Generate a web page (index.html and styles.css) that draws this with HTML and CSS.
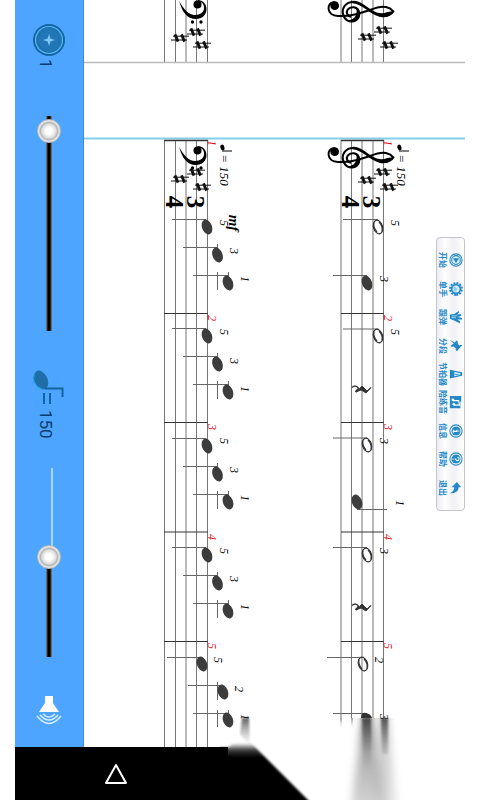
FILE: index.html
```html
<!DOCTYPE html>
<html lang="zh-CN">

<head>
    <meta charset="UTF-8">
    <meta name="viewport" content="width=device-width, initial-scale=1.0">
    <title>Piano practice</title>
    <link rel="stylesheet" href="styles.css">
</head>

<body>
    <div class="app">
        <aside class="sidebar">
            <button class="track" aria-label="Track 1">
                <svg width="34" height="34" viewBox="0 0 34 34">
                    <circle cx="17" cy="17" r="16" fill="#1565a0" />
                    <circle cx="17" cy="17" r="13.5" fill="#1d74b0" stroke="#55b6f2" stroke-width="1.2" />
                    <circle cx="17" cy="17" r="10.5" fill="#2277b4" />
                    <path d="M17 11l1.4 4.6L23 17l-4.6 1.4L17 23l-1.4-4.6L11 17l4.6-1.4z" fill="#7cc8fa" />
                </svg>
                <span class="value">1</span>
            </button>
            <input class="slider slider-position" type="range" min="0" max="1000" value="16" aria-label="Position">
            <div class="tempo">
                <svg width="34" height="36" viewBox="0 0 34 36">
                    <ellipse cx="9" cy="10" rx="6.5" ry="10" transform="rotate(-25 9 10)" fill="#1f6ea8" />
                    <path d="M3 3Q-2 14 10 19" fill="none" stroke="#12a0dd" />
                    <path d="M13 18.500H30.500V27" fill="none" stroke="#12649c" stroke-width="2" />
                    <path d="M12 23v11M18 23v11" stroke="#12649c" stroke-width="2" />
                </svg>
                <span class="value">150</span>
            </div>
            <input class="slider slider-volume" type="range" min="0" max="1000" value="467" aria-label="Volume">
            <svg class="speaker" width="28" height="34" viewBox="0 0 28 34">
                <path d="M10 1h8v7l6 9H4l6-9z" fill="#fff" />
                <path d="M8 19q6 6 12 0M5 20q9 10 18 0M2 21q12 15 24 0" fill="none" stroke="#d9edff" stroke-width="1.500" />
            </svg>
        </aside>

        <main class="sheet">
            <svg class="score" viewBox="84 0 381 800">
                <defs>
                    <ellipse id="head" rx="5" ry="7.700" transform="rotate(-20)" fill="#3c3c3c" />
                    <g id="half">
                        <ellipse rx="4.500" ry="7" transform="rotate(-17)" fill="none" stroke="#333" stroke-width="1.200" />
                        <path d="M-4-4.500Q-5 1-1 5M4 4.500Q5-1 1-5" fill="none" stroke="#333" stroke-width="1.200" />
                    </g>
                    <g id="sharp" stroke="#111" fill="none">
                        <path d="M-9 2H7M-7-1.800H9" />
                        <path d="M-5-3.600l3 7.200M1.500-3.600l3 7.200" stroke-width="2.800" />
                    </g>
                    <g id="rest">
                        <path d="M-10-1.500Q-6-5-3 0" fill="none" stroke="#333" stroke-width="1.500" />
                        <path d="M-3.500 0L-6.500 3" stroke="#333" stroke-width="2" />
                        <path d="M-5 2.500L0-3L5 2L9-1.500L4 4L1 2L-1 1z" fill="#333" stroke="#333" />
                    </g>
                    <g id="bass">
                        <path d="M179 0.500C183 9 189 15 195 15C200.500 15 204 12 204 8C204 4 202 1.500 198 1.500L197.500 0C203 0 206.500 4 206.500 9C206.500 15 202 19 196 19C187 19 182 12 179 0.500z" />
                        <circle cx="197.500" cy="4.500" r="4" />
                        <circle cx="192.500" cy="22" r="1.700" />
                        <circle cx="201" cy="22" r="1.700" />
                    </g>
                    <g id="treble" transform="translate(310 0) scale(.3333)">
                        <circle cx="74" cy="17" r="13" />
                        <path d="M74 7C48 5 48 48 84 48C120 50 150 40 180 30C200 22 215 18 228 21C240 24 246 29 250 34C244 43 236 48 222 47" fill="none" stroke="#000" stroke-width="6" />
                        <path d="M128 2C152 1 165 18 184 29C203 41 217 42 232 36L253 33C240 51 225 55 208 50C176 42 160 13 128 10z" />
                        <path d="M130 6C106 6 95 25 99 42C103 60 118 67 131 64C148 59 151 43 145 31C139 20 122 18 113 29C107 38 112 48 123 50" fill="none" stroke="#000" stroke-width="6" />
                        <path d="M113 61Q128 71 141 61Q153 50 149 32Q146 23 138 21Q144 44 131 55Q124 61 113 61z" />
                    </g>
                    <g id="tempo-note">
                        <ellipse cx="2" cy="-2" rx="2" ry="3" transform="rotate(-15)" />
                        <path d="M1 1H11" stroke="#000" />
                    </g>
                    <g id="left-stems" class="line">
                        <path d="M172 219.500H206M183 247.500H217M193 275.500H228" />
                        <path d="M217.500 244v18M217.500 272v18M228.500 272v18" />
                    </g>
                    <g id="left-notes">
                        <use href="#left-stems" />
                        <use href="#head" x="207" y="227" />
                        <use href="#head" x="217.500" y="255" />
                        <use href="#head" x="228" y="283" />
                    </g>
                    <linearGradient id="fade" x2="0" y2="1">
                        <stop offset="0" stop-color="#333" stop-opacity=".8" />
                        <stop offset=".4" stop-color="#888" stop-opacity=".7" />
                        <stop offset="1" stop-color="#bbb" stop-opacity=".7" />
                    </linearGradient>
                    <linearGradient id="fade-out" x2="0" y2="1">
                        <stop offset="0" stop-color="#333" stop-opacity=".8" />
                        <stop offset="1" stop-color="#aaa" stop-opacity="0" />
                    </linearGradient>
                    <linearGradient id="corner" gradientUnits="userSpaceOnUse" x1="0" y1="743" x2="0" y2="757">
                        <stop offset="0" stop-color="#000" stop-opacity="0" />
                        <stop offset=".5" stop-color="#000" stop-opacity=".75" />
                        <stop offset="1" stop-color="#000" />
                    </linearGradient>
                    <filter id="soft"><feGaussianBlur stdDeviation="1" /></filter>
                    <filter id="softer" x="-1" y="0" width="3" height="1.2"><feGaussianBlur stdDeviation="4 0" /></filter>
                </defs>

                <!-- end of the previous line -->
                <path class="staff" d="M164.500 0V62M175.500 0V62M186 0V62M196.500 0V62M207.500 0V62M341 0V62M351.500 0V62M362 0V62M373 0V62M383.500 0V62" />
                <use href="#bass" />
                <use href="#sharp" x="180" y="38" />
                <use href="#sharp" x="196" y="32" />
                <use href="#sharp" x="202" y="45" />
                <use href="#treble" />
                <use href="#sharp" x="367" y="37" />
                <use href="#sharp" x="383" y="30" />
                <use href="#sharp" x="389" y="45" />
                <path d="M84 62.500H465" stroke="#bbb" stroke-width="1.500" />
                <path d="M84 138.500H465" stroke="#84d0ea" stroke-width="2" />

                <!-- staves and bar lines -->
                <path class="staff" d="M164.500 140V747M175.500 140V747M186 140V747M196.500 140V747M207.500 140V747M341 140V718M351.500 140V718M362 140V718M373 140V718M383.500 140V718" />
                <path d="M164 140.500H208M341 140.500H384" stroke="#333" stroke-width="1.500" />
                <path class="bar" d="M164 313.500H208M164 422.500H208M164 532H208M164 641.500H208M341 313.500H384M341 422.500H384M341 532H384M341 641.500H384" />

                <!-- left hand -->
                <use href="#bass" y="146" />
                <use href="#sharp" x="180" y="179" />
                <use href="#sharp" x="196" y="172" />
                <use href="#sharp" x="202" y="187" />
                <use href="#tempo-note" x="221" y="150" />
                <use href="#left-notes" />
                <use href="#left-notes" y="109" />
                <use href="#left-notes" y="219" />
                <use href="#left-notes" y="328" />
                <path class="line" d="M167 657.500H201M188 685.500H222M193 713.500H228M217.500 682v18M217.500 710v17M228.500 710v8" />
                <use href="#head" x="202" y="664" />
                <use href="#head" x="223" y="692" />
                <use href="#head" x="228" y="720" />

                <!-- right hand -->
                <use href="#treble" y="146" />
                <use href="#sharp" x="367" y="180" />
                <use href="#sharp" x="383" y="172" />
                <use href="#sharp" x="389" y="187" />
                <use href="#tempo-note" x="398" y="150" />
                <path class="line" d="M343 219.500H378M333 275.500H367M343 329H378M333 438H367M357 509.500H387M333 547.500H367M327 657.500H362M333 713.500H367" />
                <use href="#half" x="378" y="227" />
                <use href="#head" x="367" y="283" />
                <use href="#half" x="378" y="336" />
                <use href="#rest" x="362" y="389" />
                <use href="#half" x="367" y="445" />
                <use href="#head" x="357" y="502" />
                <use href="#half" x="367" y="555" />
                <use href="#rest" x="362" y="607" />
                <use href="#half" x="363" y="664" />
                <path d="M361 718Q361 712 366 713Q371 714 372 718z" fill="#333" />

                <!-- time signature -->
                <g class="time">
                    <text transform="translate(187 202) rotate(90)">3</text>
                    <text transform="translate(166 202) rotate(90)">4</text>
                    <text transform="translate(363 202) rotate(90)">3</text>
                    <text transform="translate(342 202) rotate(90)">4</text>
                </g>
                <g class="mark">
                    <text transform="translate(220 170) rotate(90)">= 150</text>
                    <text transform="translate(397 170) rotate(90)">= 150</text>
                </g>
                <text class="dynamic" transform="translate(229 223) rotate(90)">mf</text>

                <g class="bar-number">
                    <text transform="translate(208 143) rotate(90)">1</text>
                    <text transform="translate(208 318) rotate(90)">2</text>
                    <text transform="translate(208 427) rotate(90)">3</text>
                    <text transform="translate(208 537) rotate(90)">4</text>
                    <text transform="translate(208 646) rotate(90)">5</text>
                    <text transform="translate(384 143) rotate(90)">1</text>
                    <text transform="translate(384 318) rotate(90)">2</text>
                    <text transform="translate(384 427) rotate(90)">3</text>
                    <text transform="translate(384 537) rotate(90)">4</text>
                    <text transform="translate(384 646) rotate(90)">5</text>
                </g>

                <!-- fingering -->
                <g class="finger">
                    <text transform="translate(220 223) rotate(90)">5</text>
                    <text transform="translate(230 251) rotate(90)">3</text>
                    <text transform="translate(241 279) rotate(90)">1</text>
                    <text transform="translate(220 332) rotate(90)">5</text>
                    <text transform="translate(230 361) rotate(90)">3</text>
                    <text transform="translate(241 389) rotate(90)">1</text>
                    <text transform="translate(220 441) rotate(90)">5</text>
                    <text transform="translate(230 470) rotate(90)">3</text>
                    <text transform="translate(241 498) rotate(90)">1</text>
                    <text transform="translate(220 551) rotate(90)">5</text>
                    <text transform="translate(230 579) rotate(90)">3</text>
                    <text transform="translate(241 607) rotate(90)">1</text>
                    <text transform="translate(214 660) rotate(90)">5</text>
                    <text transform="translate(235 689) rotate(90)">2</text>
                    <text transform="translate(241 717) rotate(90)">1</text>
                    <text transform="translate(391 223) rotate(90)">5</text>
                    <text transform="translate(380 279) rotate(90)">3</text>
                    <text transform="translate(391 332) rotate(90)">5</text>
                    <text transform="translate(380 441) rotate(90)">3</text>
                    <text transform="translate(396 503) rotate(90)">1</text>
                    <text transform="translate(380 551) rotate(90)">3</text>
                    <text transform="translate(375 660) rotate(90)">2</text>
                    <text transform="translate(380 717) rotate(90)">3</text>
                </g>

                <!-- page curl shadow -->
                <rect x="325" y="719" width="75" height="10" fill="#fff" />
                <path d="M363 718H371L386 800H352z" fill="url(#fade)" filter="url(#softer)" />
                <path d="M381 718H387L396 800H374z" fill="url(#fade)" opacity=".6" filter="url(#softer)" />
                <path d="M362 718h9v56h-8zM381 718h7v36h-6z" fill="url(#fade-out)" filter="url(#soft)" />
                <path d="M340 718h2v10h-2zM351 718h2v10h-2z" fill="url(#fade-out)" opacity=".6" />
                <path d="M231 729L236 722L262 746H231z" fill="#fff" filter="url(#soft)" />
                <path d="M242 718H249L250 746L240 734z" fill="url(#fade-out)" filter="url(#soft)" />
                <path d="M220 747H229L234 742H250L310 802V810H220z" fill="url(#corner)" filter="url(#soft)" />
            </svg>

            <div class="toolbar">
                <button><span>开始</span>
                    <svg viewBox="0 0 16 16"><circle cx="8" cy="8" r="7" fill="#fff" stroke="#2488c8" stroke-width="1.200" /><circle cx="8" cy="8" r="5" fill="#d7efff" stroke="#2488c8" stroke-width="1.200" /><path d="M6 4.500v7L11.500 8z" fill="#2488c8" /></svg>
                </button>
                <button><span>单手</span>
                    <svg viewBox="0 0 16 16"><circle cx="8" cy="8" r="6.800" fill="none" stroke="#2488c8" stroke-width="2.200" stroke-dasharray="2.200 1.360" /><circle cx="8" cy="8" r="5" fill="#e0f3ff" stroke="#2488c8" stroke-width="2" /><path d="M5 9q3-5 6 0v2H5z" fill="#8fcbed" /></svg>
                </button>
                <button><span>跟弹</span>
                    <svg viewBox="0 0 16 16"><path d="M5 15L4.500 10L1 5L3 4.500L5 7L4.500 2L6.500 2L8 6L9 1L11 1.500L10.500 6.500L13 3L15 4L12.500 9L10 15z" fill="#2488c8" /><path d="M6.500 7l.5 6M9 8l-.5 5" stroke="#a9dcfa" /></svg>
                </button>
                <button><span>分段</span>
                    <svg viewBox="0 0 16 16"><path d="M7 1L14 7L12 8.500L11 8L8.500 10.500L9 13L7.500 14L5 10.500L1 15L4 9.500L1.500 7L3 6L5.500 6L7.500 4L6.500 2.500z" fill="#2488c8" /></svg>
                </button>
                <button><span>节拍器</span>
                    <svg viewBox="0 0 16 16"><path d="M6 1h4l3 14H3z" fill="#2488c8" /><path d="M7 3h2l1.500 7h-5z" fill="#d7efff" /><path d="M8 10l1.500-7" stroke="#2488c8" /></svg>
                </button>
                <button><span>陪练音</span>
                    <svg viewBox="0 0 16 16"><path d="M1 2h6l1 1h7v12H1z" fill="#2488c8" /><path d="M6.500 11.500V5l5-1v6.500" fill="none" stroke="#fff" stroke-width="1.300" /><circle cx="5.500" cy="11.500" r="1.500" fill="#fff" /><circle cx="10.500" cy="10.500" r="1.500" fill="#fff" /></svg>
                </button>
                <button><span>信息</span>
                    <svg viewBox="0 0 16 16"><circle cx="8" cy="8" r="7" fill="#fff" stroke="#2488c8" stroke-width="1.200" /><circle cx="8" cy="8" r="5.200" fill="#2488c8" /><path d="M6.500 7H8.500V11M6.500 11H10M8 4v1.600" fill="none" stroke="#fff" stroke-width="1.400" /></svg>
                </button>
                <button><span>帮助</span>
                    <svg viewBox="0 0 16 16"><circle cx="8" cy="8" r="7" fill="#fff" stroke="#2488c8" stroke-width="1.200" /><circle cx="8" cy="8" r="5.200" fill="#2488c8" /><path d="M6 6.500Q6 4.500 8 4.500T10 6.500Q10 7.500 8 8.500V9.500M8 10.500V12" fill="none" stroke="#fff" stroke-width="1.300" /></svg>
                </button>
                <button><span>退出</span>
                    <svg viewBox="0 0 16 16"><path d="M1 7L7 2V5Q14 5 14 15Q11 9.500 7 10V13z" fill="#2488c8" /></svg>
                </button>
            </div>
        </main>

        <nav class="navbar">
            <button class="back" aria-label="Back">
                <svg width="24" height="22" viewBox="0 0 24 22">
                    <path d="M12 2L22 20H2z" fill="none" stroke="#fff" stroke-width="2" stroke-linejoin="round" />
                </svg>
            </button>
        </nav>
    </div>
</body>

</html>
```
FILE: styles.css
```css
body {
    margin: 0;
    background: #fff;
    font-family: Roboto, "Noto Sans CJK SC", sans-serif;
}

button {
    padding: 0;
    border: none;
    background: none;
    font: inherit;
    color: inherit;
}

svg {
    display: block;
}

.app {
    display: grid;
    grid-template-columns: 69px 1fr;
    grid-template-rows: 1fr 53px;
    min-height: 100vh;
    padding: 0 15px;
    box-sizing: border-box;
}

/* left strip with the two sliders */
.sidebar {
    grid-area: 1 / 1;
    display: flex;
    flex-direction: column;
    align-items: center;
    padding-top: 23px;
    box-sizing: border-box;
    background: #4da5ff;
    border-right: 1px solid #3f8bd8;
    color: #0b3c6c;
}

.track,
.tempo {
    display: flex;
    flex-direction: column;
    align-items: center;
}

.value {
    writing-mode: vertical-rl;
    font-size: 17px;
    line-height: 20px;
    margin-right: 6px;
}

.track .value {
    margin-top: 2px;
}

.tempo {
    margin-top: 39px;
}

.tempo .value {
    margin-top: 4px;
}

.slider {
    appearance: none;
    writing-mode: vertical-lr;
    width: 24px;
    margin: 0;
    background: linear-gradient(90deg, #888, #000 35%, #000 65%, #888) center / 6px 100% no-repeat;
}

.slider-position {
    height: 215px;
    margin-top: 47px;
}

.slider-volume {
    height: 189px;
    margin-top: 30px;
    background: linear-gradient(#a8d6ff, #a8d6ff) 14px 0 / 2px 50% no-repeat,
        linear-gradient(90deg, #888, #000 35%, #000 65%, #888) center bottom / 6px 50% no-repeat;
}

.slider::-webkit-slider-thumb {
    appearance: none;
    width: 24px;
    height: 24px;
    border: 1px solid #bbb;
    border-radius: 50%;
    background: radial-gradient(circle, #fff 20%, #ddd 45%, #b4b4b4 56%, #e4e4e4 64%);
}

.speaker {
    margin-top: 38px;
}

/* sheet music */
.sheet {
    grid-area: 1 / 2 / 3 / 3;
    position: relative;
}

.score {
    width: 100%;
    font-family: "Liberation Serif", serif;
    text-anchor: middle;
}

.staff {
    fill: none;
    stroke: #777;
}

.line {
    fill: none;
    stroke: #666;
}

.bar {
    fill: none;
    stroke: #333;
}

.time {
    font-size: 25px;
    font-weight: bold;
}

.mark {
    font-size: 13px;
    font-style: italic;
}

.dynamic {
    font-size: 15px;
    font-weight: bold;
    font-style: italic;
}

.bar-number,
.finger {
    font-size: 12px;
    font-style: italic;
}

.bar-number {
    fill: #e01010;
}

/* floating menu over the sheet */
.toolbar {
    position: absolute;
    top: 237px;
    right: 0;
    display: grid;
    grid-auto-rows: 1fr;
    width: 29px;
    height: 274px;
    padding: 8px 4px 8px 0;
    box-sizing: border-box;
    border: 1px solid #c4c4cc;
    border-radius: 4px;
    background: linear-gradient(90deg, #ececf2, #fff 30%, #f0f0f6 60%, #fff);
}

.toolbar button {
    display: flex;
    align-items: center;
    justify-content: center;
    color: #2488c8;
}

.toolbar span {
    writing-mode: vertical-rl;
    text-orientation: sideways;
    white-space: nowrap;
    font: bold 8px/12px "Noto Sans CJK SC", sans-serif;
}

.toolbar svg {
    width: 14px;
    height: 14px;
    transform: rotate(90deg);
}

/* system bar */
.navbar {
    grid-area: 2 / 1 / 3 / 3;
    z-index: 1;
    width: 213px;
    display: flex;
    align-items: center;
    justify-content: center;
    padding-right: 12px;
    box-sizing: border-box;
    background: #000;
}
```
